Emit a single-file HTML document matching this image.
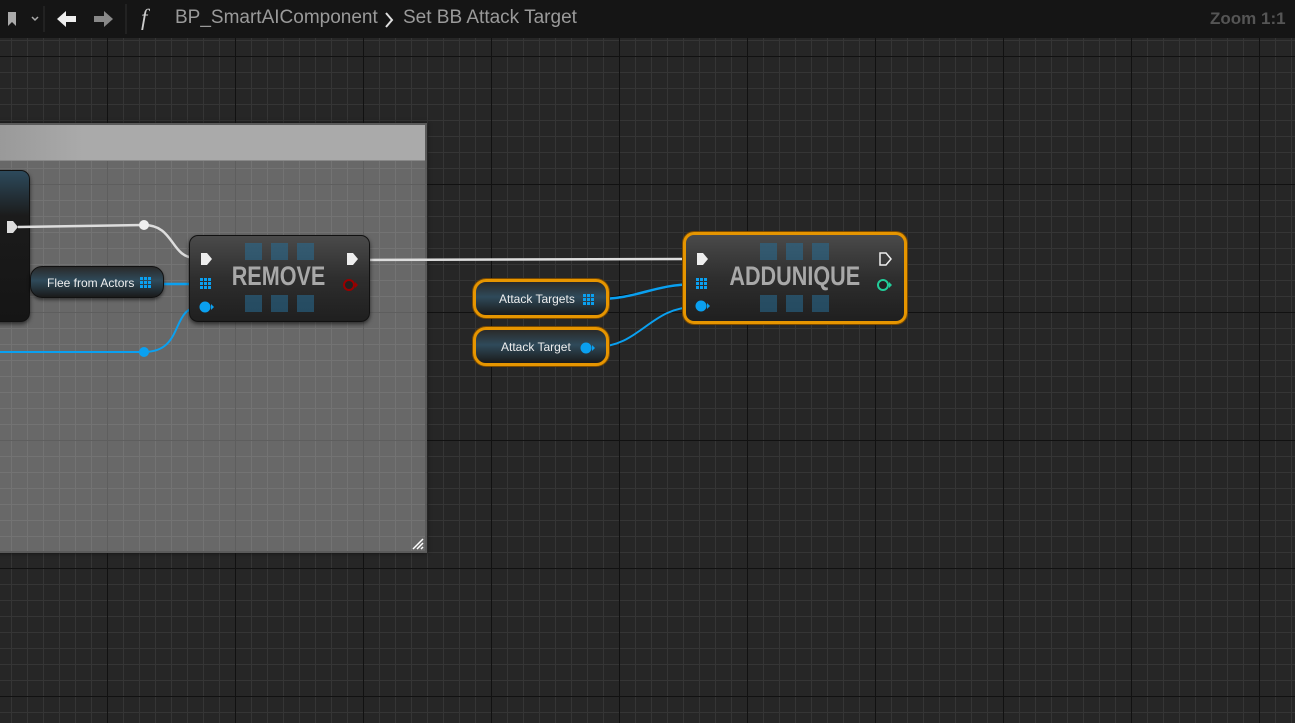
<!DOCTYPE html>
<html><head><meta charset="utf-8"><style>
*{margin:0;padding:0;box-sizing:border-box}
body{width:1295px;height:723px;overflow:hidden;position:relative;font-family:"Liberation Sans",sans-serif;
background-color:#262626;
background-image:
linear-gradient(90deg,#111 1px,transparent 1px),
linear-gradient(0deg,#111 1px,transparent 1px),
linear-gradient(90deg,#353535 1px,transparent 1px),
linear-gradient(0deg,#353535 1px,transparent 1px);
background-size:128px 128px,128px 128px,16px 16px,16px 16px;
background-position:107px 57px,107px 57px,11px 9px,11px 9px;}
.top{position:absolute;left:0;top:0;width:1295px;height:38px;background:#151515;color:#9a9a9a;font-size:19px}
.top span{position:absolute;top:7px}
.comment{position:absolute;left:-4px;top:123px;width:431px;height:430px;background-color:#686868;border:2px solid #5a5a5a;
background-image:linear-gradient(90deg,#5e5e5e 1px,transparent 1px),linear-gradient(0deg,#5e5e5e 1px,transparent 1px),linear-gradient(90deg,#737373 1px,transparent 1px),linear-gradient(0deg,#737373 1px,transparent 1px);
background-size:128px 128px,128px 128px,16px 16px,16px 16px;background-position:109px -68px,109px -68px,13px -116px,13px -116px;box-shadow:0 0 4px #111}
.chead{position:absolute;left:0;top:0;width:427px;height:36px;background:linear-gradient(90deg,#999,#aaa 20%,#aaa);border-bottom:1px solid #888}
.node{position:absolute;border-radius:9px;background:linear-gradient(#4a4a4a,#2e2e2e 50%,#1f1f1f);border:1px solid #111;box-shadow:0 2px 4px rgba(0,0,0,.6)}
.big{position:absolute;left:0;right:0;text-align:center;font-weight:bold;font-size:27px;color:#a8a8a8}
.big b{display:inline-block;transform:scaleX(.8)}
.sq{position:absolute;width:17px;height:17px;background:rgba(40,110,150,.55)}
.pill{position:absolute;height:32px;border-radius:12px;background:linear-gradient(#2a2a2a,#2f4a5a 45%,#1a1a1a);border:1px solid #111;color:#eee;font-size:12px;box-shadow:0 2px 3px rgba(0,0,0,.5)}
.o{border:3px solid #e69500;box-shadow:0 0 0 1px #7a4a00}
</style></head><body>
<div class="top">
<svg style="position:absolute;left:6px;top:11px" width="34" height="16"><path d="M2 1H10V15L6 11L2 15Z" fill="#aaa"/><path d="M26 6L29 9L32 6" stroke="#aaa" stroke-width="1.5" fill="none"/></svg>
<div style="position:absolute;left:43px;top:6px;width:2px;height:26px;background:#222"></div>
<svg style="position:absolute;left:54px;top:8px" width="62" height="22"><path d="M3 11L12 3V8H22V14H12V19Z" fill="#eee"/><path d="M59 11L50 3V8H40V14H50V19Z" fill="#888"/></svg>
<div style="position:absolute;left:125px;top:4px;width:2px;height:30px;background:#222"></div>
<span style="left:141px;top:5px;font-family:'Liberation Serif',serif;font-style:italic;font-size:23px;color:#ccc">f</span>
<span style="left:175px">BP_SmartAIComponent</span>
<svg style="position:absolute;left:383px;top:11px" width="12" height="18"><path d="M3 2L9 9L3 16" stroke="#ddd" stroke-width="2" fill="none"/></svg>
<span style="left:403px">Set BB Attack Target</span>
<span style="left:1210px;color:#555;font-weight:bold;font-size:17px;top:9px">Zoom 1:1</span>
</div>
<div class="comment"><div class="chead"></div>
<svg style="position:absolute;right:0;bottom:0" width="14" height="14"><path d="M2 12L12 2M6 12L12 6M10 12L12 10" stroke="#fff" stroke-width="1.5"/></svg></div>

<div class="node" style="left:-10px;top:170px;width:40px;height:152px;background:linear-gradient(#2d4a5c,#1b1b1b 30%,#151515)"></div>

<svg style="position:absolute;left:0;top:0" width="1295" height="723">
<path d="M18 227 L144 225 C175 225 170 258 196 258" stroke="#ddd" stroke-width="2.5" fill="none"/>
<circle cx="144" cy="225" r="5" fill="#eee"/>
<path d="M0 352 L144 352 C185 352 170 307 200 307" stroke="#0aa0f0" stroke-width="2" fill="none"/>
<circle cx="144" cy="352" r="5" fill="#0aa0f0"/>
<path d="M150 284 L200 284" stroke="#0aa0f0" stroke-width="2.5"/>
<path d="M357 260 L690 259" stroke="#ddd" stroke-width="2.5"/>
<path d="M595 299 C640 299 650 285 695 284" stroke="#0aa0f0" stroke-width="2.5"/>
<path d="M595 347 C640 347 650 307 695 307" stroke="#0aa0f0" stroke-width="2" fill="none"/>
</svg>
<svg style="position:absolute;left:6px;top:220px" width="14" height="14"><path d="M1 1H7L12 7L7 13H1Z" fill="#ddd"/></svg>

<div class="node" style="left:189px;top:235px;width:181px;height:87px">
<div class="sq" style="left:55px;top:7px"></div><div class="sq" style="left:81px;top:7px"></div><div class="sq" style="left:107px;top:7px"></div>
<div class="sq" style="left:55px;top:59px"></div><div class="sq" style="left:81px;top:59px"></div><div class="sq" style="left:107px;top:59px"></div>
<div class="big" style="top:25px;left:-1px"><b>REMOVE</b></div>
<svg style="position:absolute;left:10px;top:16px" width="14" height="14"><path d="M1 1H7L12 7L7 13H1Z" fill="#eee"/></svg>
<svg style="position:absolute;left:10px;top:42px" width="12" height="12" fill="#0aa0f0"><rect x="0" y="0" width="3" height="3"/><rect x="4" y="0" width="3" height="3"/><rect x="8" y="0" width="3" height="3"/><rect x="0" y="4" width="3" height="3"/><rect x="4" y="4" width="3" height="3"/><rect x="8" y="4" width="3" height="3"/><rect x="0" y="8" width="3" height="3"/><rect x="4" y="8" width="3" height="3"/><rect x="8" y="8" width="3" height="3"/></svg>
<svg style="position:absolute;left:9px;top:65px" width="16" height="12"><circle cx="6" cy="6" r="5.5" fill="#0aa0f0"/><path d="M12 3L15 6L12 9Z" fill="#0aa0f0"/></svg>
<svg style="position:absolute;left:156px;top:16px" width="14" height="14"><path d="M1 1H7L12 7L7 13H1Z" fill="#eee"/></svg>
<svg style="position:absolute;left:153px;top:42px" width="16" height="14"><circle cx="6" cy="7" r="5" fill="#222" stroke="#900" stroke-width="2"/><path d="M12 4L15 7L12 10Z" fill="#900"/></svg>
</div>

<div class="pill" style="left:30px;top:266px;width:134px"><span style="position:absolute;left:16px;top:9px">Flee from Actors</span>
<svg style="position:absolute;left:109px;top:10px" width="12" height="12" fill="#0aa0f0"><rect x="0" y="0" width="3" height="3"/><rect x="4" y="0" width="3" height="3"/><rect x="8" y="0" width="3" height="3"/><rect x="0" y="4" width="3" height="3"/><rect x="4" y="4" width="3" height="3"/><rect x="8" y="4" width="3" height="3"/><rect x="0" y="8" width="3" height="3"/><rect x="4" y="8" width="3" height="3"/><rect x="8" y="8" width="3" height="3"/></svg></div>

<div class="node o" style="left:683px;top:232px;width:224px;height:92px;border-radius:11px">
<div class="sq" style="left:74px;top:8px"></div><div class="sq" style="left:100px;top:8px"></div><div class="sq" style="left:126px;top:8px"></div>
<div class="sq" style="left:74px;top:60px"></div><div class="sq" style="left:100px;top:60px"></div><div class="sq" style="left:126px;top:60px"></div>
<div class="big" style="top:26px;left:-1px"><b>ADDUNIQUE</b></div>
<svg style="position:absolute;left:10px;top:17px" width="14" height="14"><path d="M1 1H7L12 7L7 13H1Z" fill="#eee"/></svg>
<svg style="position:absolute;left:10px;top:43px" width="12" height="12" fill="#0aa0f0"><rect x="0" y="0" width="3" height="3"/><rect x="4" y="0" width="3" height="3"/><rect x="8" y="0" width="3" height="3"/><rect x="0" y="4" width="3" height="3"/><rect x="4" y="4" width="3" height="3"/><rect x="8" y="4" width="3" height="3"/><rect x="0" y="8" width="3" height="3"/><rect x="4" y="8" width="3" height="3"/><rect x="8" y="8" width="3" height="3"/></svg>
<svg style="position:absolute;left:9px;top:65px" width="16" height="12"><circle cx="6" cy="6" r="5.5" fill="#0aa0f0"/><path d="M12 3L15 6L12 9Z" fill="#0aa0f0"/></svg>
<svg style="position:absolute;left:193px;top:17px" width="14" height="14"><path d="M1 1H7L12 7L7 13H1Z" fill="none" stroke="#eee" stroke-width="1.5"/></svg>
<svg style="position:absolute;left:191px;top:43px" width="16" height="14"><circle cx="6" cy="7" r="5" fill="#222" stroke="#2c9" stroke-width="2"/><path d="M12 4L15 7L12 10Z" fill="#2c9"/></svg>
</div>

<div class="pill o" style="left:473px;top:279px;width:136px;height:39px;border-radius:13px"><span style="position:absolute;left:23px;top:10px">Attack Targets</span>
<svg style="position:absolute;left:107px;top:12px" width="12" height="12" fill="#0aa0f0"><rect x="0" y="0" width="3" height="3"/><rect x="4" y="0" width="3" height="3"/><rect x="8" y="0" width="3" height="3"/><rect x="0" y="4" width="3" height="3"/><rect x="4" y="4" width="3" height="3"/><rect x="8" y="4" width="3" height="3"/><rect x="0" y="8" width="3" height="3"/><rect x="4" y="8" width="3" height="3"/><rect x="8" y="8" width="3" height="3"/></svg></div>
<div class="pill o" style="left:473px;top:327px;width:136px;height:39px;border-radius:13px"><span style="position:absolute;left:25px;top:10px">Attack Target</span>
<svg style="position:absolute;left:104px;top:12px" width="16" height="12"><circle cx="6" cy="6" r="5.5" fill="#0aa0f0"/><path d="M12 3L15 6L12 9Z" fill="#0aa0f0"/></svg></div>
</body></html>
